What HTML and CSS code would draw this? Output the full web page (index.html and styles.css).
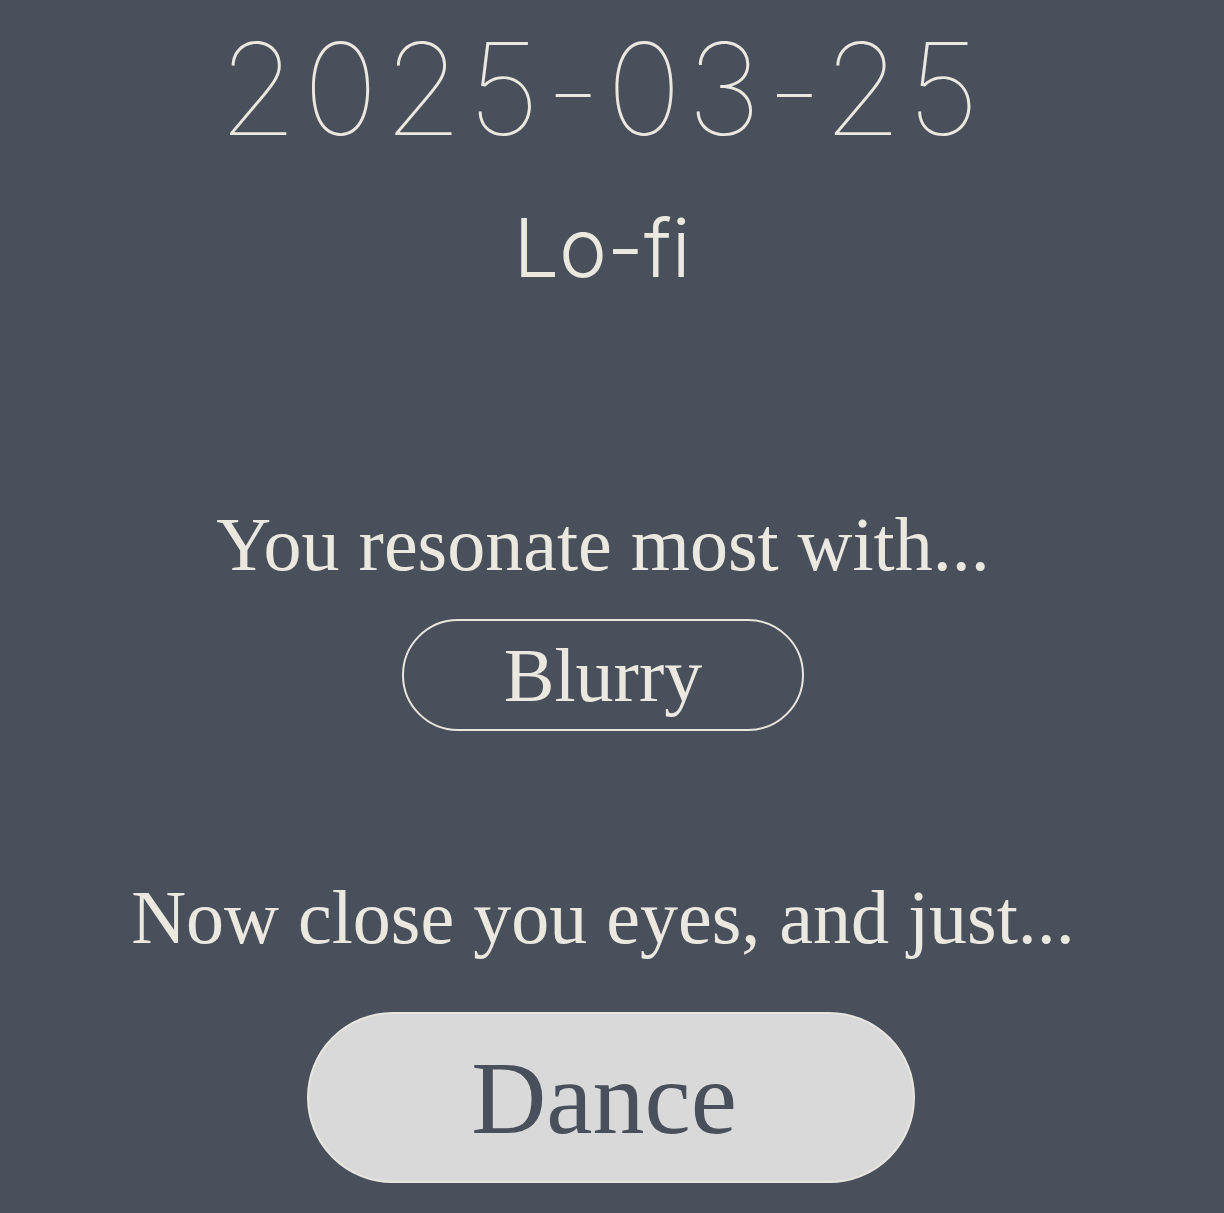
FILE: index.html
```html
<!DOCTYPE html>
<html lang="en">
<head>
<meta charset="utf-8">
<title>Lo-fi</title>
<link rel="stylesheet" href="styles.css">
</head>
<body>
<main class="page">
  <h1 class="date">2025-03-25</h1>
  <h2 class="genre">Lo-fi</h2>
  <p class="prompt prompt-first">You resonate most with...</p>
  <div class="pill pill-outline">Blurry</div>
  <p class="prompt prompt-second">Now close you eyes, and just...</p>
  <button class="pill pill-solid">Dance</button>
</main>
</body>
</html>
```

FILE: styles.css
```css
html, body {
  margin: 0;
  padding: 0;
  background: #4a505b;
}
.page {
  box-sizing: border-box;
  display: flex;
  flex-direction: column;
  align-items: center;
  color: #ebe8e0;
  min-height: 1213px;
  padding-right: 18px;
}
.date {
  margin: 25px 3px 0 0;
  font-family: Inter, "DejaVu Sans", sans-serif;
  font-weight: 100;
  font-size: 128px;
  line-height: 128px;
  letter-spacing: 5px;
}
.genre {
  margin: 57px 2px 0 0;
  font-family: Inter, "Liberation Sans", sans-serif;
  font-weight: 300;
  font-size: 81px;
  line-height: 77px;
}
.prompt {
  font-family: "Liberation Serif", serif;
  font-size: 76px;
  line-height: 76px;
  margin: 0;
}
.prompt-first { margin-top: 219px; }
.prompt-second { margin-top: 148px; }
.pill {
  box-sizing: border-box;
  display: flex;
  align-items: center;
  justify-content: center;
  border-radius: 999px;
  font-family: "Liberation Serif", serif;
}
.pill-outline {
  margin-top: 37px;
  width: 402px;
  height: 112px;
  border: 2px solid #e8e6df;
  font-size: 76px;
  line-height: 76px;
  color: #ebe8e0;
}
.pill-solid {
  margin-top: 57px;
  margin-left: 16px;
  width: 608px;
  height: 171px;
  border: 2px solid #e8e6df;
  background: #d9d9d9;
  color: #4a505b;
  font-size: 104px;
  line-height: 104px;
  padding: 0 14px 0 0;
}
```
